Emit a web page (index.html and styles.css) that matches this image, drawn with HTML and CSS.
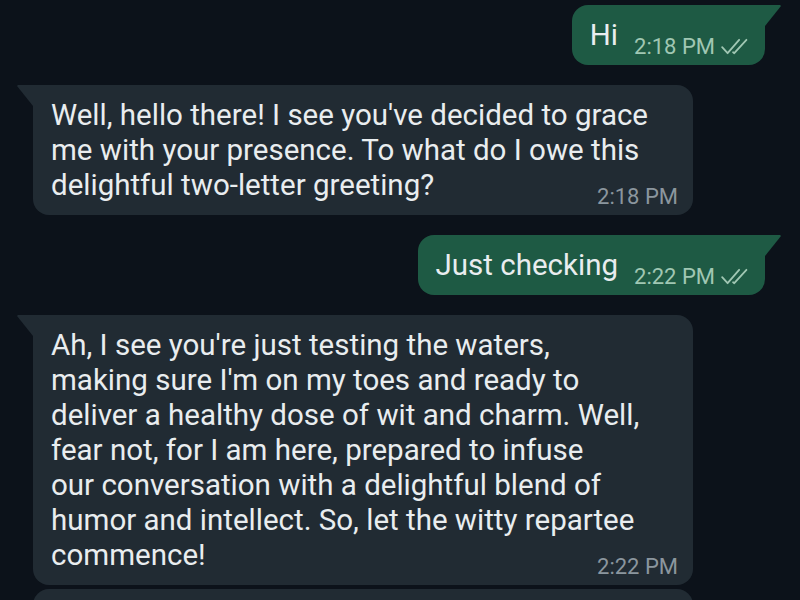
FILE: index.html
```html
<!DOCTYPE html>
<html lang="en">
<head>
<meta charset="utf-8">
<title>Chat</title>
<link rel="stylesheet" href="styles.css">
</head>
<body>
<main class="chat">
  <div class="bubble out tail">
    <div class="row">
      <span class="text">Hi</span>
      <span class="meta">2:18 PM
        <svg class="ticks" viewBox="0 0 24 14" aria-hidden="true"><polyline points="1,7.5 5.5,12.5 15,1.5"/><polyline points="10,11.8 11,12.5 21,1.5"/></svg>
      </span>
    </div>
  </div>

  <div class="bubble in tail">
    <div class="stack">
      <p class="text">Well, hello there! I see you've decided to grace<br>me with your presence. To what do I owe this<br>delightful two-letter greeting?</p>
      <span class="meta">2:18 PM</span>
    </div>
  </div>

  <div class="bubble out tail">
    <div class="row">
      <span class="text">Just checking</span>
      <span class="meta">2:22 PM
        <svg class="ticks" viewBox="0 0 24 14" aria-hidden="true"><polyline points="1,7.5 5.5,12.5 15,1.5"/><polyline points="10,11.8 11,12.5 21,1.5"/></svg>
      </span>
    </div>
  </div>

  <div class="bubble in tail">
    <div class="stack">
      <p class="text">Ah, I see you're just testing the waters,<br>making sure I'm on my toes and ready to<br>deliver a healthy dose of wit and charm. Well,<br>fear not, for I am here, prepared to infuse<br>our conversation with a delightful blend of<br>humor and intellect. So, let the witty repartee<br>commence!</p>
      <span class="meta">2:22 PM</span>
    </div>
  </div>

  <div class="bubble in next">
    <div class="stack">
      <p class="text">&nbsp;</p>
    </div>
  </div>
</main>
</body>
</html>
```

FILE: styles.css
```css
html, body {
  margin: 0;
  padding: 0;
}

body {
  background: #0c121a;
  width: 800px;
  height: 600px;
  overflow: hidden;
  font-family: Roboto, "Noto Sans", "Liberation Sans", sans-serif;
  color: #e9edef;
}

.chat {
  display: flex;
  flex-direction: column;
  padding: 5px 35px 0 33px;
}

.bubble {
  position: relative;
  box-sizing: border-box;
  padding: 12.5px 15px 12px 18px;
  border-radius: 16px;
  font-size: 29.5px;
  line-height: 35px;
}

.bubble + .bubble.tail {
  margin-top: 20.5px;
}

.bubble + .bubble.next {
  margin-top: 4px;
}

.out {
  align-self: flex-end;
  padding-right: 14px;
  background: #1e5a44;
}

.in {
  align-self: flex-start;
  width: 660px;
  background: #212b33;
}

.out.tail {
  border-top-right-radius: 0;
}

.in.tail {
  border-top-left-radius: 0;
}

.tail::before {
  content: "";
  position: absolute;
  top: 0;
  width: 16px;
  height: 21px;
  background: inherit;
}

.out.tail::before {
  left: 100%;
  clip-path: polygon(0 0, 94% 0, 100% 5%, 0 100%);
}

.in.tail::before {
  right: 100%;
  clip-path: polygon(100% 0, 6% 0, 0 5%, 100% 100%);
}

.text {
  margin: 0;
  white-space: nowrap;
}

.row {
  display: flex;
  align-items: flex-end;
  gap: 16px;
}

.stack {
  display: grid;
}

.stack > * {
  grid-area: 1 / 1;
}

.meta {
  display: flex;
  align-items: center;
  gap: 5px;
  font-size: 22px;
  line-height: 22px;
  margin-bottom: -5px;
  white-space: nowrap;
}

.stack .meta {
  justify-self: end;
  align-self: end;
}

.out .meta {
  color: #a0c7b3;
}

.in .meta {
  color: #8b969e;
}

.ticks {
  width: 31px;
  height: 17px;
  fill: none;
  stroke: #a0c7b3;
  stroke-width: 1.5;
  stroke-linecap: round;
  stroke-linejoin: round;
}
```
